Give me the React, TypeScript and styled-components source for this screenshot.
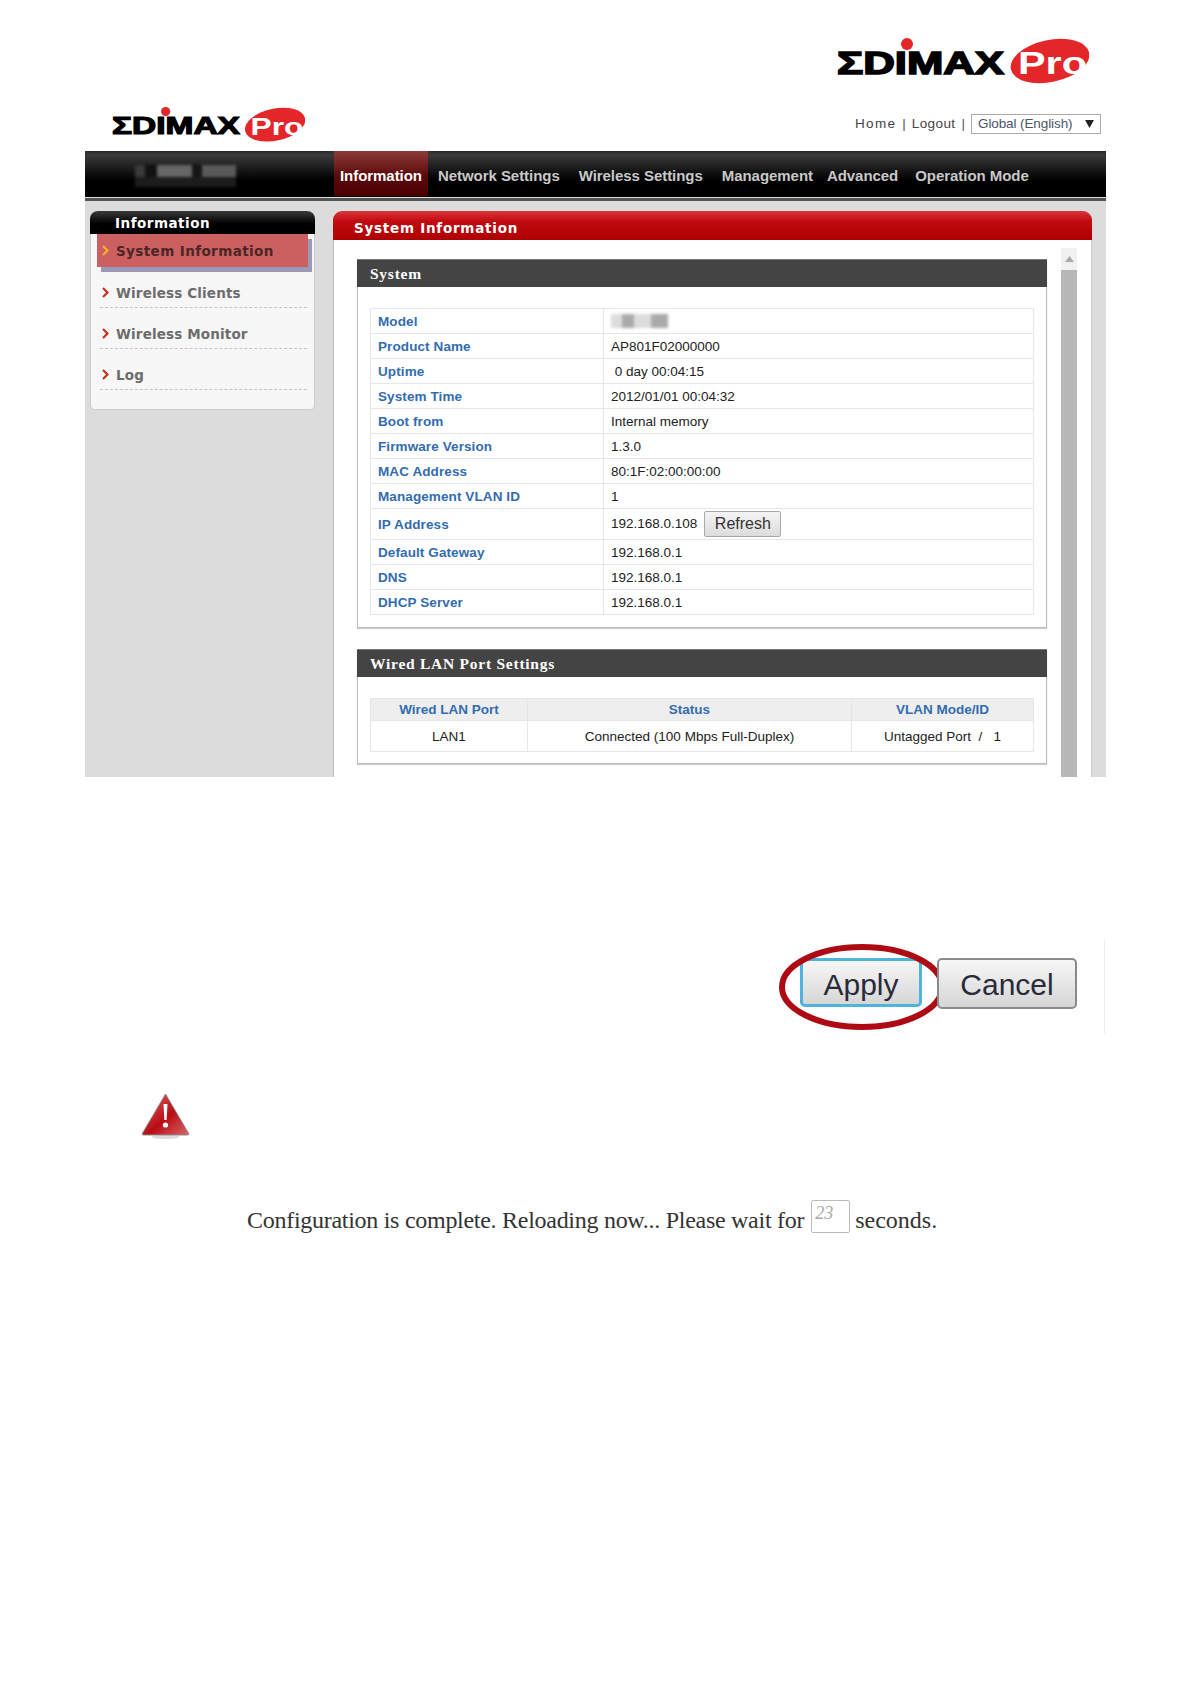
import styled, { createGlobalStyle } from "styled-components";

const GlobalStyle = createGlobalStyle`
  html, body {
    margin: 0;
    padding: 0;
    background: #fff;
  }
  * {
    box-sizing: border-box;
  }
`;

const Page = styled.div`
  width: 1190px;
  height: 1684px;
  padding-top: 38px;
  overflow: hidden;
  font-family: "Liberation Sans", Arial, sans-serif;
`;

const TopLogoRow = styled.div`
  display: flex;
  justify-content: flex-end;
  padding-right: 101px;
`;

const Shot = styled.div`
  width: 1021px;
  margin: 22px 0 0 85px;
`;

const ShotHeader = styled.header`
  height: 45px;
  padding: 1px 5px 0 27px;
  display: flex;
  justify-content: space-between;
`;

const HeaderLinks = styled.div`
  display: flex;
  align-items: center;
  height: 27px;
  margin-top: 3px;
  font-size: 13.5px;
  color: #444;
`;

const HeaderLink = styled.span<{ $spacing: number }>`
  letter-spacing: ${(p) => p.$spacing}px;
`;

const HeaderSep = styled.span`
  margin: 0 6px;
  color: #555;
`;

const LangSelect = styled.div`
  width: 130px;
  height: 20px;
  padding: 0 6px;
  display: flex;
  justify-content: space-between;
  align-items: center;
  border: 1px solid #aaa;
  color: #4a5568;
  font-size: 13.5px;
  letter-spacing: -0.1px;
`;

const NavBar = styled.nav`
  height: 50px;
  display: flex;
  background: #000;
  border-bottom: 3px solid #555;
  box-shadow: inset 0 -1px 0 #ddd;
  padding-bottom: 1px;
  background-image: linear-gradient(#2a2a2a 0%, #3a3a3a 8%, #000 62%);
`;

const BlurBlock = styled.div`
  width: 249px;
  padding: 14px 0 0 50px;
`;

const BlurStrip = styled.div`
  width: 101px;
  height: 22px;
  filter: blur(1.5px);
  background:
    linear-gradient(90deg, #3a3a3a 0 10%, #111 10% 22%, #666 22% 56%, #151515 56% 66%, #5a5a5a 66% 100%) top / 100% 55% no-repeat,
    #1c1c1c;
`;

const NavTab = styled.div<{ $active?: boolean; $left?: number }>`
  height: 45px;
  padding: 4px 6px 0;
  margin-left: ${(p) => p.$left ?? 0}px;
  display: flex;
  align-items: center;
  font-size: 15px;
  font-weight: 700;
  letter-spacing: -0.05px;
  white-space: nowrap;
  color: ${(p) => (p.$active ? "#fff" : "#c8c8c8")};
  background: ${(p) => (p.$active ? "linear-gradient(#8e3a3a, #5c0a0a 55%, #4a0000)" : "none")};
`;

const ShotBody = styled.div`
  height: 576px;
  padding-top: 10px;
  display: flex;
  align-items: flex-start;
  overflow: hidden;
  background: #dcdcdc;
`;

const Sidebar = styled.aside`
  width: 225px;
  height: 199px;
  margin-left: 5px;
  background: #f7f7f7;
  border: 1px solid #ccc;
  border-top: 0;
  border-radius: 8px 8px 5px 5px;
`;

const SidebarTitle = styled.div`
  height: 23px;
  margin: 0 -1px;
  padding: 1px 0 0 25px;
  display: flex;
  align-items: center;
  border-radius: 8px 8px 0 0;
  background: linear-gradient(#3a3a3a, #000 55%);
  color: #fff;
  font-family: "DejaVu Sans", sans-serif;
  font-size: 13.5px;
  font-weight: 700;
  letter-spacing: 0.5px;
`;

const SideActive = styled.div`
  height: 33px;
  margin: 0 6px;
  padding-left: 5px;
  display: flex;
  align-items: center;
  gap: 7px;
  background: #cc5f5f;
  box-shadow: 4px 5px 0 #9a9ab8;
  color: #4a2626;
  font-family: "DejaVu Sans", sans-serif;
  font-size: 13.5px;
  font-weight: 700;
  letter-spacing: 0.4px;
`;

const SideItem = styled.div`
  height: 41px;
  margin: 0 7px 0 9px;
  padding: 0 0 6px 2px;
  display: flex;
  align-items: flex-end;
  gap: 7px;
  border-bottom: 1px dashed #c4c4c4;
  color: #6c6c6c;
  font-family: "DejaVu Sans", sans-serif;
  font-size: 13.5px;
  font-weight: 700;
  letter-spacing: 0.15px;
`;

const SideChevron = styled.svg`
  flex: none;
  width: 7px;
  height: 11px;
  margin-bottom: 3px;
`;

const ActiveChevron = styled(SideChevron)`
  margin-bottom: 0;
`;

const MainPanel = styled.main`
  width: 759px;
  height: 567px;
  margin-left: 18px;
`;

const PanelTitle = styled.div`
  height: 29px;
  padding: 4px 0 0 21px;
  display: flex;
  align-items: center;
  border-radius: 9px 9px 0 0;
  background: linear-gradient(#d9363b 0%, #c20a10 35%, #ae0000 100%);
  color: #fff;
  font-family: "DejaVu Sans", sans-serif;
  font-size: 13.5px;
  font-weight: 700;
  letter-spacing: 0.75px;
`;

const PanelBody = styled.div`
  height: 538px;
  display: flex;
  background: #fff;
  border-left: 1px solid #bbb;
  border-right: 1px solid #ccc;
`;

const SectionColumn = styled.div`
  width: 690px;
  margin-left: 23px;
  padding-top: 19px;
  display: flex;
  flex-direction: column;
  gap: 21px;
`;

const Section = styled.section<{ $height: number }>`
  height: ${(p) => p.$height}px;
  border: 1px solid #bdbdbd;
  border-top: 0;
  box-shadow: 0 1px 1px #ccc;
`;

const SectionTitle = styled.h3`
  height: 28px;
  margin: 0 -1px;
  padding-left: 13px;
  display: flex;
  align-items: center;
  background: #444;
  border-top: 1px solid #777;
  color: #fff;
  font-family: "Liberation Serif", serif;
  font-size: 15.5px;
  font-weight: 700;
  letter-spacing: 0.75px;
`;

const InfoTable = styled.table`
  width: 664px;
  margin: 21px 0 0 12px;
  border-collapse: collapse;
  table-layout: fixed;
  font-size: 13.5px;
`;

const LabelCell = styled.td`
  width: 233px;
  padding: 0 0 0 7px;
  border: 1px solid #e6e6e6;
  color: #336cb0;
  font-weight: 700;
  letter-spacing: 0.1px;
`;

const ValueCell = styled.td`
  padding: 0 0 0 7px;
  border: 1px solid #e6e6e6;
  color: #222;
`;

const InfoRow = styled.tr<{ $tall?: boolean }>`
  height: ${(p) => (p.$tall ? 31 : 25)}px;
`;

const ModelBlur = styled.div`
  width: 57px;
  height: 14px;
  filter: blur(1.5px);
  background: linear-gradient(90deg, #ddd 0 20%, #aaa 20% 40%, #ddd 40% 70%, #aaa 70% 100%);
`;

const RefreshButton = styled.button`
  width: 77px;
  height: 26px;
  margin-left: 7px;
  padding: 0;
  border: 1px solid #aaa;
  border-radius: 2px;
  background: linear-gradient(#f5f5f5, #dcdcdc);
  color: #333;
  font-family: inherit;
  font-size: 16px;
  vertical-align: middle;
`;

const PortHead = styled.th<{ $width?: number }>`
  height: 22px;
  width: ${(p) => (p.$width ? `${p.$width}px` : "auto")};
  padding: 0;
  background: #eee;
  border: 1px solid #e6e6e6;
  color: #336cb0;
  font-weight: 700;
`;

const PortCell = styled.td`
  height: 31px;
  padding: 0;
  text-align: center;
  border: 1px solid #e6e6e6;
  color: #222;
`;

const ScrollBar = styled.div`
  width: 16px;
  margin: 8px 0 0 14px;
  display: flex;
  flex-direction: column;
  background: #f1f1f1;
`;

const ScrollArrow = styled.div`
  height: 22px;
  display: flex;
  justify-content: center;
  align-items: center;
  color: #aaa;
`;

const ScrollThumb = styled.div`
  flex: 1;
  background: #b7b7b7;
`;

const ActionRow = styled.div`
  width: 1105px;
  height: 94px;
  margin-top: 163px;
  padding: 18px 27px 0 0;
  display: flex;
  justify-content: flex-end;
  align-items: flex-start;
  gap: 15px;
  border-right: 1px solid #eee;
`;

const BigButton = styled.button<{ $focus?: boolean }>`
  position: relative;
  width: ${(p) => (p.$focus ? 122 : 140)}px;
  height: ${(p) => (p.$focus ? 49 : 51)}px;
  padding: ${(p) => (p.$focus ? "4px" : "2px")} 0 0;
  border: ${(p) => (p.$focus ? "3px solid #4db4de" : "2px solid #8a8a8a")};
  border-radius: 5px;
  background: linear-gradient(#f7f7f7, #e6e6e6 50%, #d6d6d6);
  color: #2a2a3a;
  font-family: "Liberation Sans", Arial, sans-serif;
  font-size: 30px;
`;

const FocusRing = styled.svg`
  position: absolute;
  left: -25px;
  top: -17px;
  width: 168px;
  height: 86px;
  pointer-events: none;
`;

const WarnRow = styled.div`
  margin-top: 59px;
  padding-left: 141px;
`;

const ConfigRow = styled.div`
  margin-top: 60px;
  padding-left: 247px;
  display: flex;
  align-items: center;
  height: 33px;
  color: #333;
  font-family: "Liberation Serif", serif;
  font-size: 24px;
  white-space: nowrap;
`;

const ConfigText = styled.span<{ $spacing: number }>`
  padding-top: 8px;
  letter-spacing: ${(p) => p.$spacing}px;
`;

const SecondsBox = styled.span`
  width: 39px;
  height: 33px;
  margin: 0 5px 0 7px;
  padding: 0 0 0 3px;
  border: 1px solid #bbb;
  border-radius: 2px;
  color: #aaa;
  font-size: 18px;
  font-style: italic;
  line-height: 24px;
`;

function Logo({ width }: { width: number }) {
  return (
    <svg width={width} height={(width * 46) / 252} viewBox="0 0 252 46" style={{ display: "block" }}>
      <text
        x="0"
        y="35.5"
        fontFamily="Liberation Sans"
        fontWeight="700"
        fontSize="30.5"
        textLength="167"
        lengthAdjust="spacingAndGlyphs"
        stroke="#000"
        strokeWidth="1.5"
      >
        ΣDIMAX
      </text>
      <circle cx="70" cy="6" r="6" fill="#e3262a" />
      <ellipse cx="213" cy="23" rx="40" ry="21" transform="rotate(-12 213 23)" fill="#e3262a" />
      <text
        x="181"
        y="36"
        fill="#fff"
        fontFamily="Liberation Sans"
        fontWeight="700"
        fontSize="31"
        textLength="69"
        lengthAdjust="spacingAndGlyphs"
      >
        Pro
      </text>
    </svg>
  );
}

function Chevron({ color }: { color: string }) {
  return <polyline points="1,1 5.5,5.5 1,10" fill="none" stroke={color} strokeWidth="2.2" />;
}

const infoRows: [string, string][] = [
  ["Product Name", "AP801F02000000"],
  ["Uptime", "\u00a00 day 00:04:15"],
  ["System Time", "2012/01/01 00:04:32"],
  ["Boot from", "Internal memory"],
  ["Firmware Version", "1.3.0"],
  ["MAC Address", "80:1F:02:00:00:00"],
  ["Management VLAN ID", "1"],
];

const afterIpRows: [string, string][] = [
  ["Default Gateway", "192.168.0.1"],
  ["DNS", "192.168.0.1"],
  ["DHCP Server", "192.168.0.1"],
];

const sideItems = ["Wireless Clients", "Wireless Monitor", "Log"];

export default function App() {
  return (
    <Page>
      <GlobalStyle />
      <TopLogoRow>
        <Logo width={252} />
      </TopLogoRow>

      <Shot>
        <ShotHeader>
          <Logo width={193} />
          <HeaderLinks>
            <HeaderLink $spacing={1.3}>Home</HeaderLink>
            <HeaderSep>|</HeaderSep>
            <HeaderLink $spacing={0.4}>Logout</HeaderLink>
            <HeaderSep>|</HeaderSep>
            <LangSelect>
              Global (English)
              <svg width="9" height="8" viewBox="0 0 10 9">
                <polygon points="0,0 10,0 5,9" fill="#222" />
              </svg>
            </LangSelect>
          </HeaderLinks>
        </ShotHeader>

        <NavBar>
          <BlurBlock>
            <BlurStrip />
          </BlurBlock>
          <NavTab $active>Information</NavTab>
          <NavTab $left={4}>Network Settings</NavTab>
          <NavTab $left={7}>Wireless Settings</NavTab>
          <NavTab $left={7}>Management</NavTab>
          <NavTab $left={2}>Advanced</NavTab>
          <NavTab $left={5}>Operation Mode</NavTab>
        </NavBar>

        <ShotBody>
          <Sidebar>
            <SidebarTitle>Information</SidebarTitle>
            <SideActive>
              <ActiveChevron viewBox="0 0 7 11">
                <Chevron color="#f0b030" />
              </ActiveChevron>
              System Information
            </SideActive>
            {sideItems.map((item) => (
              <SideItem key={item}>
                <SideChevron viewBox="0 0 7 11">
                  <Chevron color="#c8301c" />
                </SideChevron>
                {item}
              </SideItem>
            ))}
          </Sidebar>

          <MainPanel>
            <PanelTitle>System Information</PanelTitle>
            <PanelBody>
              <SectionColumn>
                <Section $height={369}>
                  <SectionTitle>System</SectionTitle>
                  <InfoTable>
                    <tbody>
                      <InfoRow>
                        <LabelCell>Model</LabelCell>
                        <ValueCell>
                          <ModelBlur />
                        </ValueCell>
                      </InfoRow>
                      {infoRows.map(([label, value]) => (
                        <InfoRow key={label}>
                          <LabelCell>{label}</LabelCell>
                          <ValueCell>{value}</ValueCell>
                        </InfoRow>
                      ))}
                      <InfoRow $tall>
                        <LabelCell>IP Address</LabelCell>
                        <ValueCell>
                          192.168.0.108
                          <RefreshButton>Refresh</RefreshButton>
                        </ValueCell>
                      </InfoRow>
                      {afterIpRows.map(([label, value]) => (
                        <InfoRow key={label}>
                          <LabelCell>{label}</LabelCell>
                          <ValueCell>{value}</ValueCell>
                        </InfoRow>
                      ))}
                    </tbody>
                  </InfoTable>
                </Section>

                <Section $height={115}>
                  <SectionTitle>Wired LAN Port Settings</SectionTitle>
                  <InfoTable>
                    <thead>
                      <tr>
                        <PortHead $width={157}>Wired LAN Port</PortHead>
                        <PortHead $width={324}>Status</PortHead>
                        <PortHead>VLAN Mode/ID</PortHead>
                      </tr>
                    </thead>
                    <tbody>
                      <tr>
                        <PortCell>LAN1</PortCell>
                        <PortCell>Connected (100 Mbps Full-Duplex)</PortCell>
                        <PortCell>Untagged Port &nbsp;/ &nbsp; 1</PortCell>
                      </tr>
                    </tbody>
                  </InfoTable>
                </Section>
              </SectionColumn>

              <ScrollBar>
                <ScrollArrow>
                  <svg width="9" height="6" viewBox="0 0 9 6">
                    <polygon points="0,6 9,6 4.5,0" fill="currentColor" />
                  </svg>
                </ScrollArrow>
                <ScrollThumb />
              </ScrollBar>
            </PanelBody>
          </MainPanel>
        </ShotBody>
      </Shot>

      <ActionRow>
        <BigButton $focus>
          Apply
          <FocusRing viewBox="0 0 168 86">
            <ellipse cx="84" cy="43" rx="80" ry="40" fill="none" stroke="#ad0a14" strokeWidth="6" />
          </FocusRing>
        </BigButton>
        <BigButton>Cancel</BigButton>
      </ActionRow>

      <WarnRow>
        <svg width="49" height="47" viewBox="0 0 49 47" style={{ display: "block" }}>
          <defs>
            <linearGradient id="warnFill" x1="0" y1="0" x2="1" y2="1">
              <stop offset="0" stopColor="#e8646a" />
              <stop offset="0.55" stopColor="#b80d14" />
              <stop offset="1" stopColor="#d9686c" />
            </linearGradient>
          </defs>
          <ellipse cx="24.5" cy="44" rx="14" ry="2" fill="#ddd" />
          <path d="M24.5 1 L48 41 Q48 42 46 42 L3 42 Q1 42 1 41 Z" fill="url(#warnFill)" stroke="#8d8d8d" strokeWidth="1" />
          <path d="M22.5 11 L26.5 11 L25.6 27 L23.4 27 Z" fill="#fff" />
          <circle cx="24.5" cy="32" r="2.6" fill="#fff" />
        </svg>
      </WarnRow>

      <ConfigRow>
        <ConfigText $spacing={-0.28}>Configuration is complete. Reloading now... Please wait for</ConfigText>
        <SecondsBox>23</SecondsBox>
        <ConfigText $spacing={0}>seconds.</ConfigText>
      </ConfigRow>
    </Page>
  );
}
